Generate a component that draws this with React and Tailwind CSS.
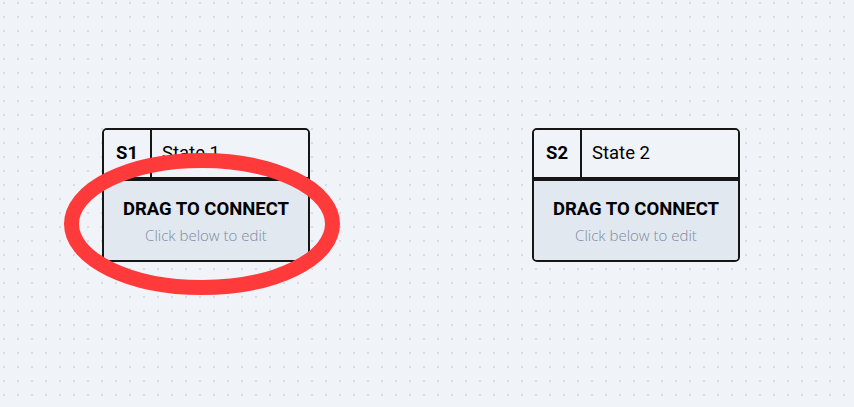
export default function App() {
  return (
    <div className="relative h-[407px] w-[854px] overflow-hidden bg-[#f0f4f8] bg-[radial-gradient(circle,#d7dce3_1px,transparent_1.3px)] bg-[size:14px_14px] bg-[position:-3px_-4px] font-['Roboto',sans-serif]">
      {/* state nodes on the canvas */}
      <StateNode id="S1" name="State 1" className="left-[102px] top-[128px]" />
      <StateNode id="S2" name="State 2" className="left-[532px] top-[128px]" />

      {/* red annotation ring */}
      <svg
        className="pointer-events-none absolute left-0 top-0"
        width="854"
        height="407"
        viewBox="0 0 854 407"
      >
        <ellipse cx="202" cy="224" rx="130.5" ry="63.5" fill="none" stroke="#ff3a3a" strokeWidth="15" />
      </svg>
    </div>
  );
}

function StateNode({ id, name, className }) {
  return (
    <div
      className={`absolute w-[208px] overflow-hidden rounded-[5px] border-2 border-[#161616] ${className}`}
    >
      <div className="flex h-[51px] border-b-4 border-[#161616] bg-[#f0f4f8]">
        <div className="flex w-[48px] items-center justify-center border-r-2 border-[#161616] text-[18.5px] font-bold text-black">
          {id}
        </div>
        <div className="flex flex-1 items-center pl-[10px] text-[18.5px] text-black">{name}</div>
      </div>
      <div className="flex h-[79px] flex-col items-center justify-center bg-[#e2e8f0]">
        <div className="text-[18.5px] font-bold leading-6 text-black">DRAG TO CONNECT</div>
        <div className="mt-[4px] font-['Open_Sans',sans-serif] text-[15px] font-light leading-5 text-[#7d8ba1]">
          Click below to edit
        </div>
      </div>
    </div>
  );
}
